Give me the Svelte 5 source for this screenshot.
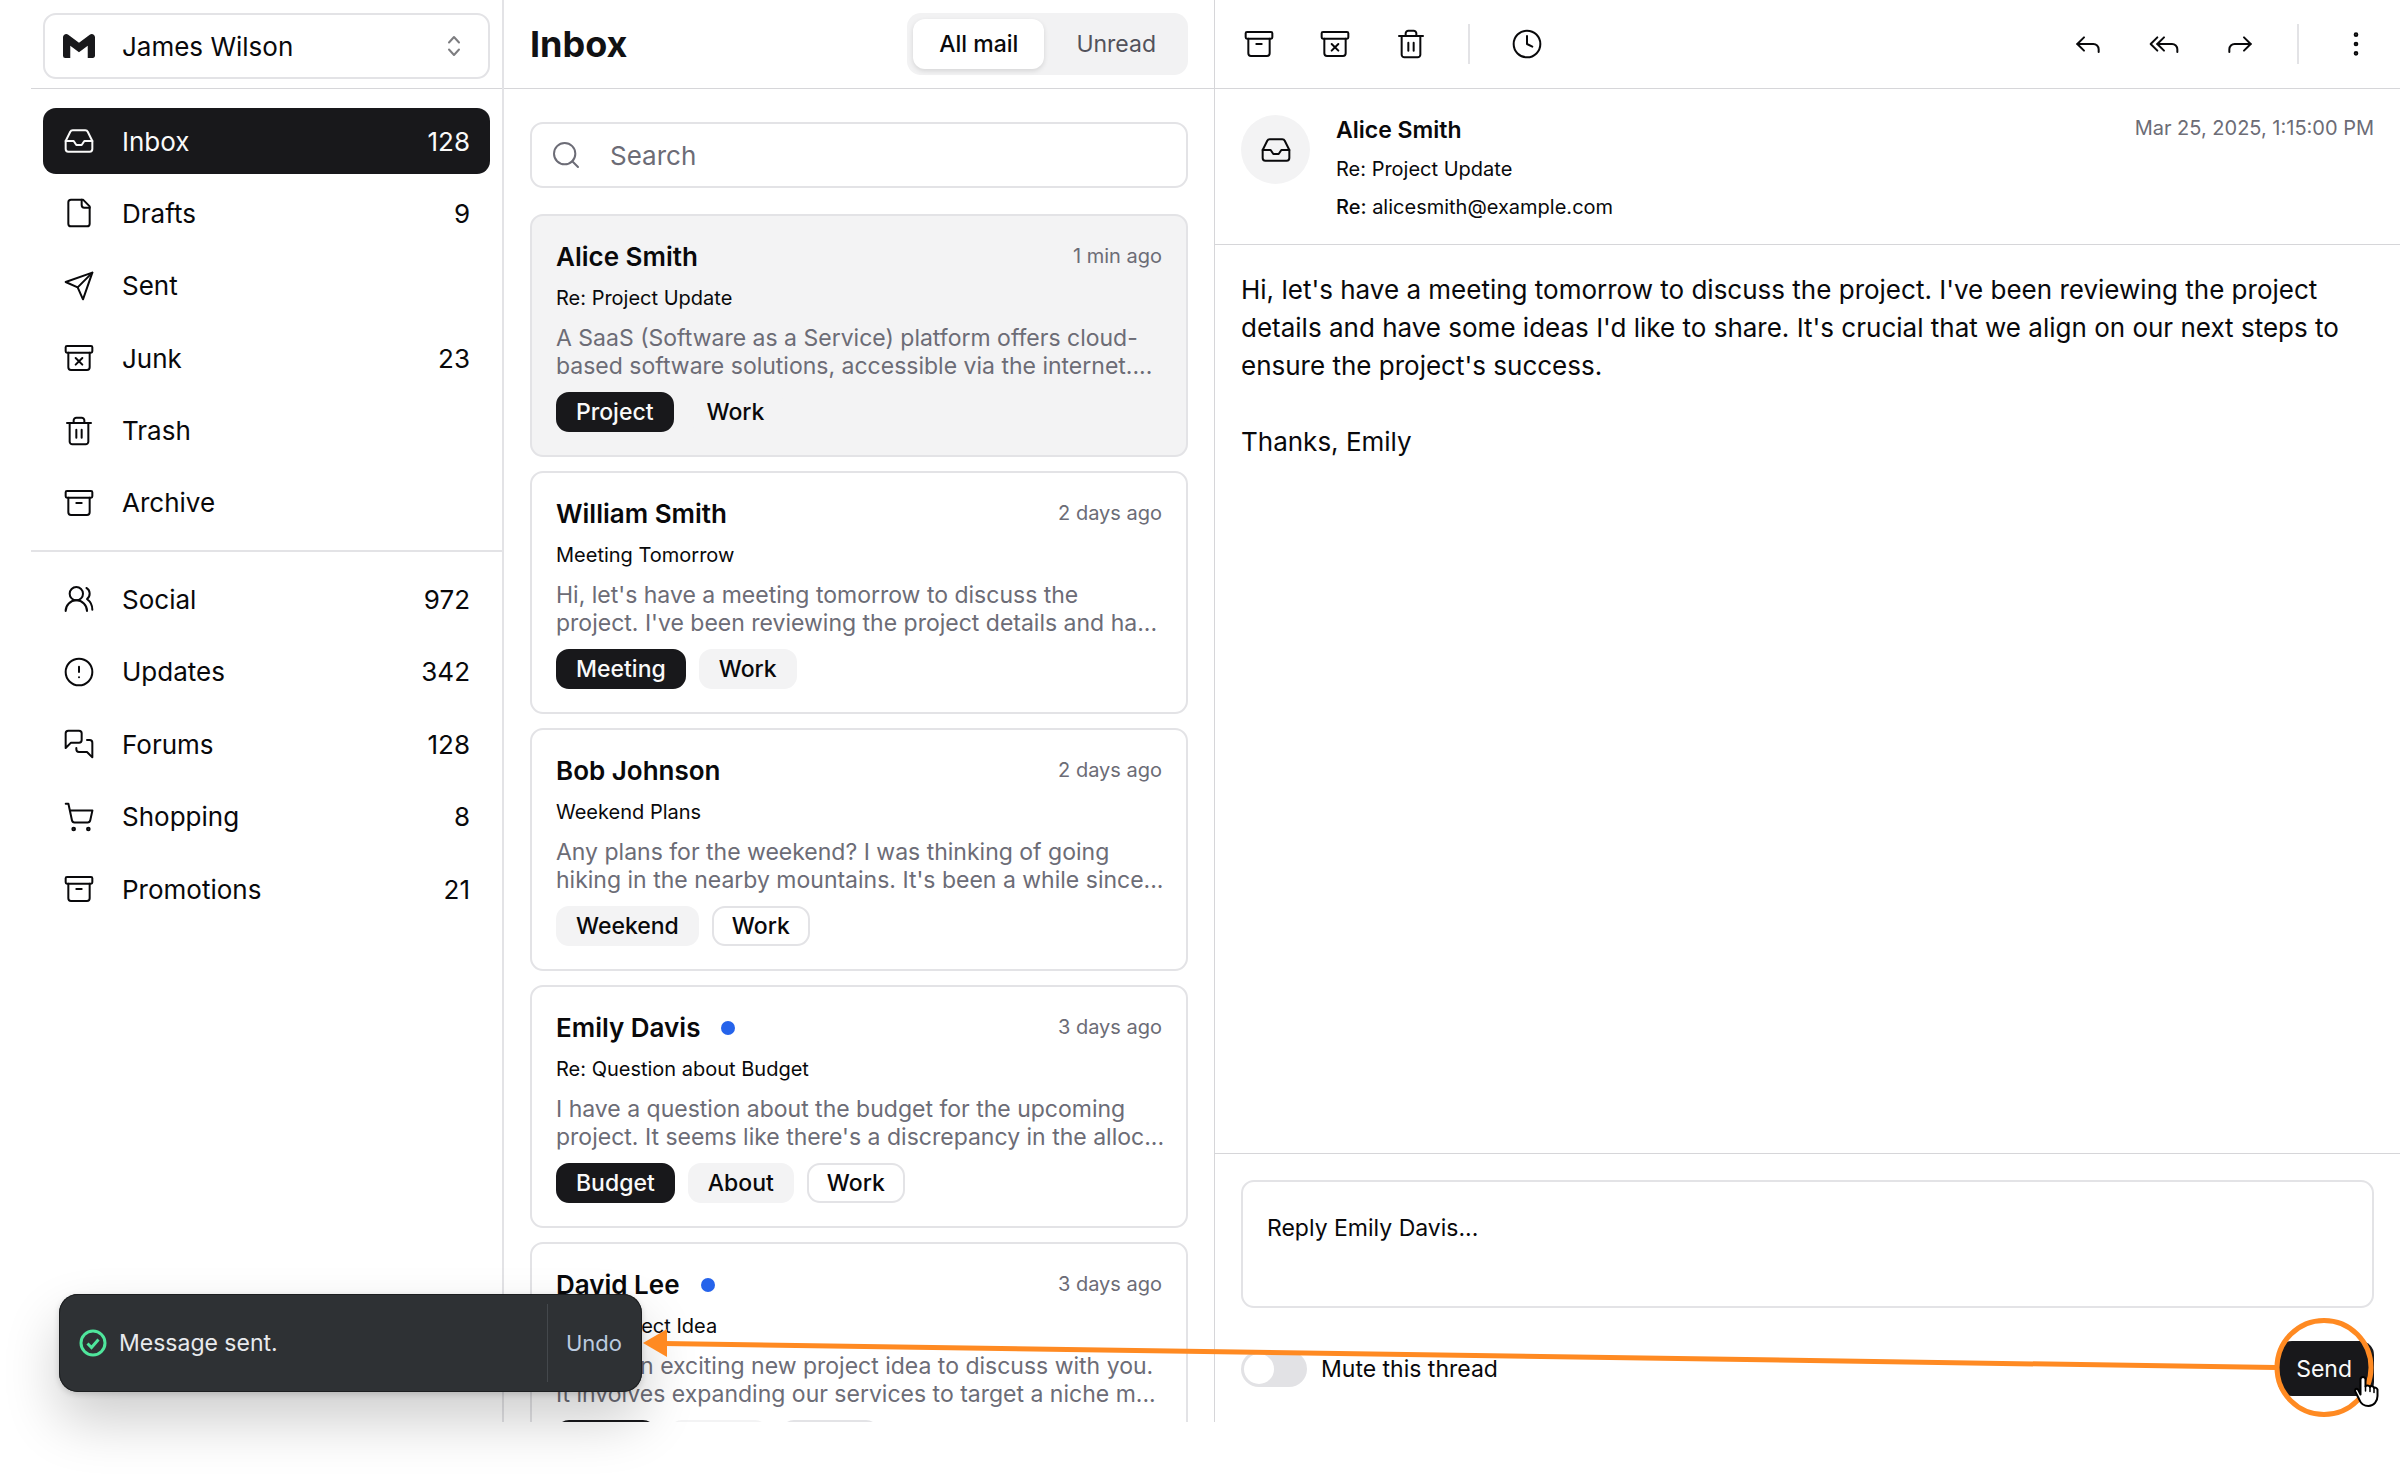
<script lang="ts">
  type Shape = { d?: string; c?: [number, number, number] };

  const icons: Record<string, Shape[]> = {
    inbox: [
      { d: 'M22 12h-6l-2 3h-4l-2-3H2' },
      { d: 'M5.45 5.11 2 12v6a2 2 0 0 0 2 2h16a2 2 0 0 0 2-2v-6l-3.45-6.89A2 2 0 0 0 16.76 4H7.24a2 2 0 0 0-1.79 1.11z' }
    ],
    file: [
      { d: 'M15 2H6a2 2 0 0 0-2 2v16a2 2 0 0 0 2 2h12a2 2 0 0 0 2-2V7Z' },
      { d: 'M14 2v4a2 2 0 0 0 2 2h4' }
    ],
    send: [{ d: 'm22 2-7 20-4-9-9-4Z' }, { d: 'M22 2 11 13' }],
    junk: [
      { d: 'M3 3h18a1 1 0 0 1 1 1v3a1 1 0 0 1-1 1H3a1 1 0 0 1-1-1V4a1 1 0 0 1 1-1z' },
      { d: 'M4 8v11a2 2 0 0 0 2 2h12a2 2 0 0 0 2-2V8' },
      { d: 'm9.5 17 5-5' },
      { d: 'm9.5 12 5 5' }
    ],
    trash: [
      { d: 'M3 6h18' },
      { d: 'M19 6v14c0 1-1 2-2 2H7c-1 0-2-1-2-2V6' },
      { d: 'M8 6V4c0-1 1-2 2-2h4c1 0 2 1 2 2v2' },
      { d: 'M10 11v6M14 11v6' }
    ],
    archive: [
      { d: 'M3 3h18a1 1 0 0 1 1 1v3a1 1 0 0 1-1 1H3a1 1 0 0 1-1-1V4a1 1 0 0 1 1-1z' },
      { d: 'M4 8v11a2 2 0 0 0 2 2h12a2 2 0 0 0 2-2V8' },
      { d: 'M10 12h4' }
    ],
    users: [
      { d: 'M18 21a8 8 0 0 0-16 0' },
      { c: [10, 8, 5] },
      { d: 'M22 20c0-3.37-2-6.5-4-8a5 5 0 0 0-.45-8.3' }
    ],
    alert: [{ c: [12, 12, 10] }, { d: 'M12 8v4M12 16h.01' }],
    forums: [
      { d: 'M14 9a2 2 0 0 1-2 2H6l-4 4V4a2 2 0 0 1 2-2h8a2 2 0 0 1 2 2v5Z' },
      { d: 'M18 9h2a2 2 0 0 1 2 2v11l-4-4h-6a2 2 0 0 1-2-2v-1' }
    ],
    cart: [
      { c: [8, 21, 1] },
      { c: [19, 21, 1] },
      { d: 'M2.05 2.05h2l2.66 12.42a2 2 0 0 0 2 1.58h9.78a2 2 0 0 0 1.95-1.57l1.65-7.43H5.12' }
    ],
    search: [{ c: [11, 11, 8] }, { d: 'm21 21-4.3-4.3' }],
    clock: [{ c: [12, 12, 10] }, { d: 'M12 6v6l4 2' }],
    reply: [{ d: 'm9 17-5-5 5-5' }, { d: 'M20 18v-2a4 4 0 0 0-4-4H4' }],
    replyAll: [{ d: 'm7 17-5-5 5-5' }, { d: 'm12 17-5-5 5-5' }, { d: 'M22 18v-2a4 4 0 0 0-4-4H7' }],
    forward: [{ d: 'm15 17 5-5-5-5' }, { d: 'M4 18v-2a4 4 0 0 1 4-4h12' }],
    more: [{ c: [12, 5, 1] }, { c: [12, 12, 1] }, { c: [12, 19, 1] }]
  };

  const folders = [
    { icon: 'inbox', label: 'Inbox', count: '128', active: true },
    { icon: 'file', label: 'Drafts', count: '9' },
    { icon: 'send', label: 'Sent', count: '' },
    { icon: 'junk', label: 'Junk', count: '23' },
    { icon: 'trash', label: 'Trash', count: '' },
    { icon: 'archive', label: 'Archive', count: '' }
  ];
  const categories = [
    { icon: 'users', label: 'Social', count: '972' },
    { icon: 'alert', label: 'Updates', count: '342' },
    { icon: 'forums', label: 'Forums', count: '128' },
    { icon: 'cart', label: 'Shopping', count: '8' },
    { icon: 'archive', label: 'Promotions', count: '21' }
  ];

  const mails = [
    {
      name: 'Alice Smith', subject: 'Re: Project Update', time: '1 min ago', selected: true, unread: false,
      lines: ['A SaaS (Software as a Service) platform offers cloud-', 'based software solutions, accessible via the internet....'],
      tags: [['Project', 'dark'], ['Work', 'soft']]
    },
    {
      name: 'William Smith', subject: 'Meeting Tomorrow', time: '2 days ago', selected: false, unread: false,
      lines: ["Hi, let's have a meeting tomorrow to discuss the", "project. I've been reviewing the project details and ha..."],
      tags: [['Meeting', 'dark'], ['Work', 'soft']]
    },
    {
      name: 'Bob Johnson', subject: 'Weekend Plans', time: '2 days ago', selected: false, unread: false,
      lines: ['Any plans for the weekend? I was thinking of going', "hiking in the nearby mountains. It's been a while since..."],
      tags: [['Weekend', 'soft'], ['Work', 'outline']]
    },
    {
      name: 'Emily Davis', subject: 'Re: Question about Budget', time: '3 days ago', selected: false, unread: true,
      lines: ['I have a question about the budget for the upcoming', "project. It seems like there's a discrepancy in the alloc..."],
      tags: [['Budget', 'dark'], ['About', 'soft'], ['Work', 'outline']]
    },
    {
      name: 'David Lee', subject: 'New Project Idea', time: '3 days ago', selected: false, unread: true,
      lines: ['I have an exciting new project idea to discuss with you.', 'It involves expanding our services to target a niche m...'],
      tags: [['Ideas', 'dark'], ['Ideas', 'soft'], ['Work', 'outline']]
    }
  ];
</script>

{#snippet icon(name: string)}
  <svg class="icon" viewBox="0 0 24 24" aria-hidden="true">
    {#each icons[name] as s}
      {#if s.d}<path d={s.d} />{/if}
      {#if s.c}<circle cx={s.c[0]} cy={s.c[1]} r={s.c[2]} />{/if}
    {/each}
  </svg>
{/snippet}

{#snippet navList(items: { icon: string; label: string; count: string; active?: boolean }[])}
  {#each items as item}
    <li>
      <a href="#{item.label.toLowerCase()}" class:active={item.active}>
        {@render icon(item.icon)}
        <span class="label">{item.label}</span>
        <span>{item.count}</span>
      </a>
    </li>
  {/each}
{/snippet}

<div class="page">
  <div class="app">
    <aside class="sidebar">
      <div class="bar account-bar">
        <button class="account" type="button">
          <svg class="logo" viewBox="0 0 24 24" aria-hidden="true">
            <path d="M24 5.457v13.909c0 .904-.732 1.636-1.636 1.636h-3.819V11.73L12 16.64l-6.545-4.91v9.273H1.636A1.636 1.636 0 0 1 0 19.366V5.457c0-2.023 2.309-3.178 3.927-1.964L5.455 4.64 12 9.548l6.545-4.91 1.528-1.145C21.69 2.28 24 3.434 24 5.457z" />
          </svg>
          <span class="label">James Wilson</span>
          <svg class="sorter" viewBox="0 0 32 32" aria-hidden="true">
            <path d="m11 12.500 5-5.500 5 5.500M11 19.500l5 5.500 5-5.500" />
          </svg>
        </button>
      </div>
      <nav aria-label="Mail folders">
        <ul class="nav folders">{@render navList(folders)}</ul>
        <hr />
        <ul class="nav categories">{@render navList(categories)}</ul>
      </nav>
    </aside>

    <section class="list" aria-label="Messages">
      <header class="bar list-bar">
        <h1>Inbox</h1>
        <div class="tabs" role="tablist">
          <button type="button" role="tab" class="on" aria-selected="true">All mail</button>
          <button type="button" role="tab" aria-selected="false">Unread</button>
        </div>
      </header>
      <div class="scroll">
        <label class="search">
          {@render icon('search')}
          <input type="search" placeholder="Search" aria-label="Search" />
        </label>
        {#each mails as mail}
          <article class="card" class:selected={mail.selected}>
            <div class="top">
              <h2>{mail.name}</h2>
              {#if mail.unread}<span class="dot"></span>{/if}
              <time>{mail.time}</time>
            </div>
            <p class="subject">{mail.subject}</p>
            <p class="preview">{mail.lines[0]}<br />{mail.lines[1]}</p>
            <div class="tags">
              {#each mail.tags as [text, kind]}
                <span class="tag {kind}">{text}</span>
              {/each}
            </div>
          </article>
        {/each}
      </div>
    </section>

    <main class="reader">
      <div class="bar tools">
        <button type="button" aria-label="Archive">{@render icon('archive')}</button>
        <button type="button" aria-label="Move to junk">{@render icon('junk')}</button>
        <button type="button" aria-label="Move to trash">{@render icon('trash')}</button>
        <span class="sep"></span>
        <button type="button" aria-label="Snooze">{@render icon('clock')}</button>
        <span class="spacer"></span>
        <button type="button" aria-label="Reply">{@render icon('reply')}</button>
        <button type="button" aria-label="Reply all">{@render icon('replyAll')}</button>
        <button type="button" aria-label="Forward">{@render icon('forward')}</button>
        <span class="sep"></span>
        <button type="button" aria-label="More">{@render icon('more')}</button>
      </div>
      <header class="meta">
        <span class="avatar">{@render icon('inbox')}</span>
        <div class="who">
          <h2>Alice Smith</h2>
          <p>Re: Project Update</p>
          <p><b>Re:</b> alicesmith@example.com</p>
        </div>
        <time>Mar 25, 2025, 1:15:00 PM</time>
      </header>
      <div class="body">
        <p>Hi, let's have a meeting tomorrow to discuss the project. I've been reviewing the project details and have some ideas I'd like to share. It's crucial that we align on our next steps to ensure the project's success.</p>
        <p>Thanks, Emily</p>
      </div>
      <form class="composer">
        <textarea aria-label="Reply" placeholder="Reply Emily Davis..."></textarea>
        <div class="actions">
          <label class="mute">
            <input type="checkbox" role="switch" />
            <span>Mute this thread</span>
          </label>
          <button class="send" type="button">Send</button>
        </div>
      </form>
    </main>
  </div>

  <div class="toast" role="status">
    <svg class="check" viewBox="0 0 28 28" aria-hidden="true">
      <circle cx="14" cy="14" r="12" />
      <path d="m8.500 14.500 4 4 7-8" />
    </svg>
    <span class="label">Message sent.</span>
    <button type="button">Undo</button>
  </div>

  <svg class="callout" viewBox="0 0 2400 1481" preserveAspectRatio="xMaxYMax meet" aria-hidden="true">
    <path class="stroke" d="M664 1343.500 2276 1367.500" />
    <path class="head" d="M643 1343l24-14v28z" />
    <circle class="stroke" cx="2324" cy="1367.500" r="47" />
    <path class="hand" d="M2360.500 1394.500V1379.500a2.500 2.500 0 0 1 5 0V1386.500c.5-1.500 4-1.500 4.500.5 1-1.500 3.500-1 4 1 1-1 3 0 3.500 1.500V1396c0 5-3.500 10-9 10-5 0-7.500-2-9-6l-4-8c-1.500-3 1.500-4.500 3-1.500z" />
    <path class="knuckle" d="M2365.500 1386v5M2370 1387v4.500M2374 1388.500v4" />
  </svg>
</div>

<style>
  :global(body) {
    background: #fff;
  }
  .page {
    --line: #e3e3e6;
    --rule: #d6d6d9;
    --ink: #09090b;
    --muted: #6c6c76;
    box-sizing: border-box;
    position: relative;
    height: 100vh;
    padding: 0 0 59px 31px;
    overflow: hidden;
    color: var(--ink);
    font-family: Inter, 'Liberation Sans', sans-serif;
    font-size: 26px;
  }
  .page :global(*) {
    box-sizing: border-box;
  }
  button,
  input,
  textarea {
    font: inherit;
    color: inherit;
    background: none;
    border: 0;
    margin: 0;
    padding: 0;
  }
  h1,
  h2,
  p,
  ul {
    margin: 0;
    padding: 0;
  }
  .icon {
    flex: none;
    width: 32px;
    height: 32px;
    fill: none;
    stroke: currentColor;
    stroke-width: 1.5;
    stroke-linecap: round;
    stroke-linejoin: round;
  }
  .app {
    display: grid;
    grid-template-columns: minmax(0, 473fr) minmax(0, 711fr) minmax(0, 1185fr);
    height: 100%;
  }
  .bar {
    display: flex;
    align-items: center;
    height: 89px;
    flex: none;
    border-bottom: 1px solid var(--rule);
  }

  .sidebar {
    border-right: 2px solid var(--line);
  }
  .account-bar {
    padding: 4px 12px 0;
  }
  .account {
    display: flex;
    align-items: center;
    width: 100%;
    height: 66px;
    padding: 0 18px;
    border: 2px solid var(--line);
    border-radius: 13px;
    text-align: left;
  }
  .logo {
    width: 32px;
    height: 32px;
    fill: #18181b;
  }
  .label {
    flex: 1;
  }
  .account .label,
  .nav .label {
    padding-left: 27px;
  }
  .sorter {
    width: 32px;
    height: 32px;
    fill: none;
    stroke: #7d7d80;
    stroke-width: 2;
    stroke-linecap: round;
    stroke-linejoin: round;
  }
  nav {
    padding-top: 5px;
  }
  .nav {
    display: grid;
    align-content: space-between;
    list-style: none;
    padding: 14px 12px;
  }
  .folders {
    height: 456px;
  }
  .categories {
    height: 384px;
  }
  .nav a {
    display: flex;
    align-items: center;
    height: 66px;
    padding: 0 20px;
    border-radius: 13px;
    color: inherit;
    text-decoration: none;
  }
  .nav a.active {
    background: #18181b;
    color: #fafafa;
  }
  hr {
    margin: 0;
    border: 0;
    height: 2px;
    background: var(--line);
  }

  .list {
    display: flex;
    flex-direction: column;
    min-height: 0;
    border-right: 1px solid var(--rule);
  }
  .list-bar {
    justify-content: space-between;
    padding: 0 26px;
  }
  h1 {
    font-size: 36px;
    font-weight: 700;
    color: #111113;
  }
  .tabs {
    display: flex;
    gap: 6px;
    height: 62px;
    padding: 6px;
    border-radius: 14px;
    background: #f2f2f3;
  }
  .tabs button {
    padding: 0 26px;
    border-radius: 12px;
    font-size: 23px;
    color: #52525b;
  }
  .tabs .on {
    background: #fff;
    color: var(--ink);
    font-weight: 500;
    box-shadow: 0 2px 5px #0000001f;
  }
  .scroll {
    flex: 1;
    min-height: 0;
    overflow: hidden;
    padding: 33px 26px 0;
  }
  .search {
    display: flex;
    align-items: center;
    gap: 28px;
    height: 66px;
    margin-bottom: 26px;
    padding: 0 18px;
    border: 2px solid var(--line);
    border-radius: 13px;
    color: var(--muted);
  }
  .search input {
    flex: 1;
    min-width: 0;
    outline: 0;
  }
  ::placeholder {
    color: inherit;
    opacity: 1;
  }
  .card {
    display: grid;
    grid-template-columns: minmax(0, 1fr);
    gap: 12px;
    margin-bottom: 14px;
    padding: 24px 24px 23px;
    border: 2px solid var(--line);
    border-radius: 13px;
  }
  .card.selected {
    background: #f3f3f4;
  }
  .top {
    display: flex;
    align-items: center;
    line-height: 33px;
  }
  .card h2 {
    font-size: 26px;
    font-weight: 600;
  }
  .dot {
    width: 14px;
    height: 14px;
    margin-left: 21px;
    border-radius: 50%;
    background: #2563eb;
  }
  time {
    margin-left: auto;
    font-size: 20px;
    color: var(--muted);
  }
  .subject {
    font-size: 20px;
    line-height: 27px;
  }
  .preview {
    font-size: 23px;
    line-height: 28px;
    color: var(--muted);
    white-space: nowrap;
  }
  .tags {
    display: flex;
    gap: 13px;
  }
  .tag {
    height: 40px;
    padding: 0 18px;
    border: 2px solid transparent;
    border-radius: 13px;
    font-size: 23px;
    font-weight: 500;
    line-height: 36px;
  }
  .tag.dark {
    background: #18181b;
    border-color: #18181b;
    color: #fafafa;
  }
  .tag.soft {
    background: #f3f3f4;
    border-color: #f3f3f4;
  }
  .tag.outline {
    border-color: var(--line);
  }

  .reader {
    display: flex;
    flex-direction: column;
  }
  .tools {
    gap: 10px;
    padding: 0 11px;
  }
  .tools button {
    display: grid;
    place-items: center;
    width: 66px;
    height: 66px;
  }
  .sep {
    width: 2px;
    height: 40px;
    margin: 0 14px;
    background: var(--line);
  }
  .spacer {
    flex: 1;
  }
  .meta {
    display: flex;
    align-items: flex-start;
    padding: 26px 26px 23px;
    border-bottom: 1px solid var(--rule);
  }
  .avatar {
    display: grid;
    place-items: center;
    width: 69px;
    height: 69px;
    margin-right: 26px;
    border-radius: 50%;
    background: #f3f3f4;
  }
  .who {
    display: grid;
    gap: 10px;
    font-size: 20px;
    line-height: 28px;
  }
  .who h2 {
    font-size: 23px;
    font-weight: 600;
    line-height: 30px;
  }
  .who b {
    font-weight: 500;
  }
  .meta time {
    line-height: 26px;
  }
  .body {
    display: grid;
    align-content: start;
    gap: 38px;
    flex: 1;
    padding: 26px;
    line-height: 38px;
  }
  .composer {
    display: grid;
    gap: 33px;
    padding: 26px;
    border-top: 1px solid var(--rule);
    font-size: 23px;
  }
  textarea {
    display: block;
    width: 100%;
    height: 128px;
    padding: 28px 24px;
    border: 2px solid var(--line);
    border-radius: 13px;
    line-height: 36px;
    resize: none;
  }
  .actions {
    display: flex;
    align-items: center;
    justify-content: space-between;
  }
  .mute {
    display: flex;
    align-items: center;
    gap: 14px;
  }
  .mute input {
    appearance: none;
    width: 66px;
    height: 36px;
    padding: 3px;
    border-radius: 18px;
    background: #e2e2e5;
  }
  .mute input::before {
    content: '';
    display: block;
    width: 30px;
    height: 30px;
    border-radius: 50%;
    background: #fff;
  }
  .send {
    height: 55px;
    padding: 0 22px 0 18px;
    border-radius: 14px;
    background: #18181b;
    color: #fafafa;
  }

  .toast {
    position: absolute;
    left: 59px;
    bottom: 89px;
    display: flex;
    align-items: center;
    width: 583px;
    height: 98px;
    padding: 10px 0 10px 20px;
    border-radius: 19px;
    background: #2e3134;
    box-shadow: inset 0 0 0 1px #1c1e20, 0 2px 6px #00000026, 0 28px 56px #00000033;
    color: #e8eaed;
    font-size: 23px;
  }
  .check {
    width: 28px;
    height: 28px;
    margin-right: 12px;
    fill: none;
    stroke: #4fe69c;
    stroke-width: 3;
  }
  .toast button {
    height: 100%;
    padding: 0 20px 0 18px;
    border-left: 1px solid #44484c;
    color: #bccbe0;
    font-size: 22px;
  }
  .callout {
    position: absolute;
    inset: 0;
    width: 100%;
    height: 100%;
    pointer-events: none;
  }
  .stroke {
    fill: none;
    stroke: #ff8a22;
    stroke-width: 5;
  }
  .head {
    fill: #ff8a22;
  }
  .hand {
    fill: #fff;
    stroke: #000;
    stroke-width: 2;
    stroke-linejoin: round;
  }
  .knuckle {
    fill: none;
    stroke: #000;
    stroke-width: 1.5;
    stroke-linecap: round;
  }
</style>
